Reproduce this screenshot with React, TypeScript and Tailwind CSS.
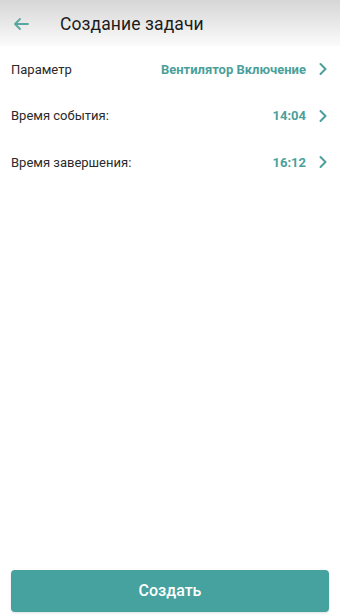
import React from 'react';

type Row = { label: string; value: string };

const rows: Row[] = [
  { label: 'Параметр', value: 'Вентилятор Включение' },
  { label: 'Время события:', value: '14:04' },
  { label: 'Время завершения:', value: '16:12' },
];

const Chevron = () => (
  <svg width="10" height="14" viewBox="0 0 10 14" fill="none" className="ml-[12px]">
    <path d="M2.5 2l5 5-5 5" stroke="#4b9f9b" strokeWidth="2" strokeLinecap="round" strokeLinejoin="round" />
  </svg>
);

const App: React.FC = () => {
  return (
    <div
      className="w-[340px] h-[616px] bg-white flex flex-col"
      style={{ fontFamily: 'Roboto, "Noto Sans", sans-serif' }}
    >
      <div className="h-[46px] flex items-center pt-[2px] bg-gradient-to-b from-[#d6d6d6] to-[#fbfbfb]">
        <svg width="18" height="14" viewBox="0 0 18 14" fill="none" className="ml-[12px]">
          <path d="M16 7H3M8 2L3 7l5 5" stroke="#5aa6a0" strokeWidth="1.8" strokeLinecap="round" strokeLinejoin="round" />
        </svg>
        <span className="ml-[30px] text-[17.5px] text-[#1c1c1c] tracking-[0.1px]">Создание задачи</span>
      </div>
      <div className="flex flex-col">
        {rows.map((row) => (
          <div key={row.label} className="h-[46.5px] flex items-center pl-[11px] pr-[12px]">
            <span className="text-[13px] text-[#2a2a2a]">{row.label}</span>
            <span className="ml-auto text-[13px] font-bold text-[#4b9f9b]">{row.value}</span>
            <Chevron />
          </div>
        ))}
      </div>
      <div className="flex-1" />
      <div className="px-[11px] pb-[4px]">
        <button className="w-full h-[42px] rounded-[4px] bg-[#45a29e] text-white text-[16px] font-medium shadow-sm">
          Создать
        </button>
      </div>
    </div>
  );
};

export default App;
